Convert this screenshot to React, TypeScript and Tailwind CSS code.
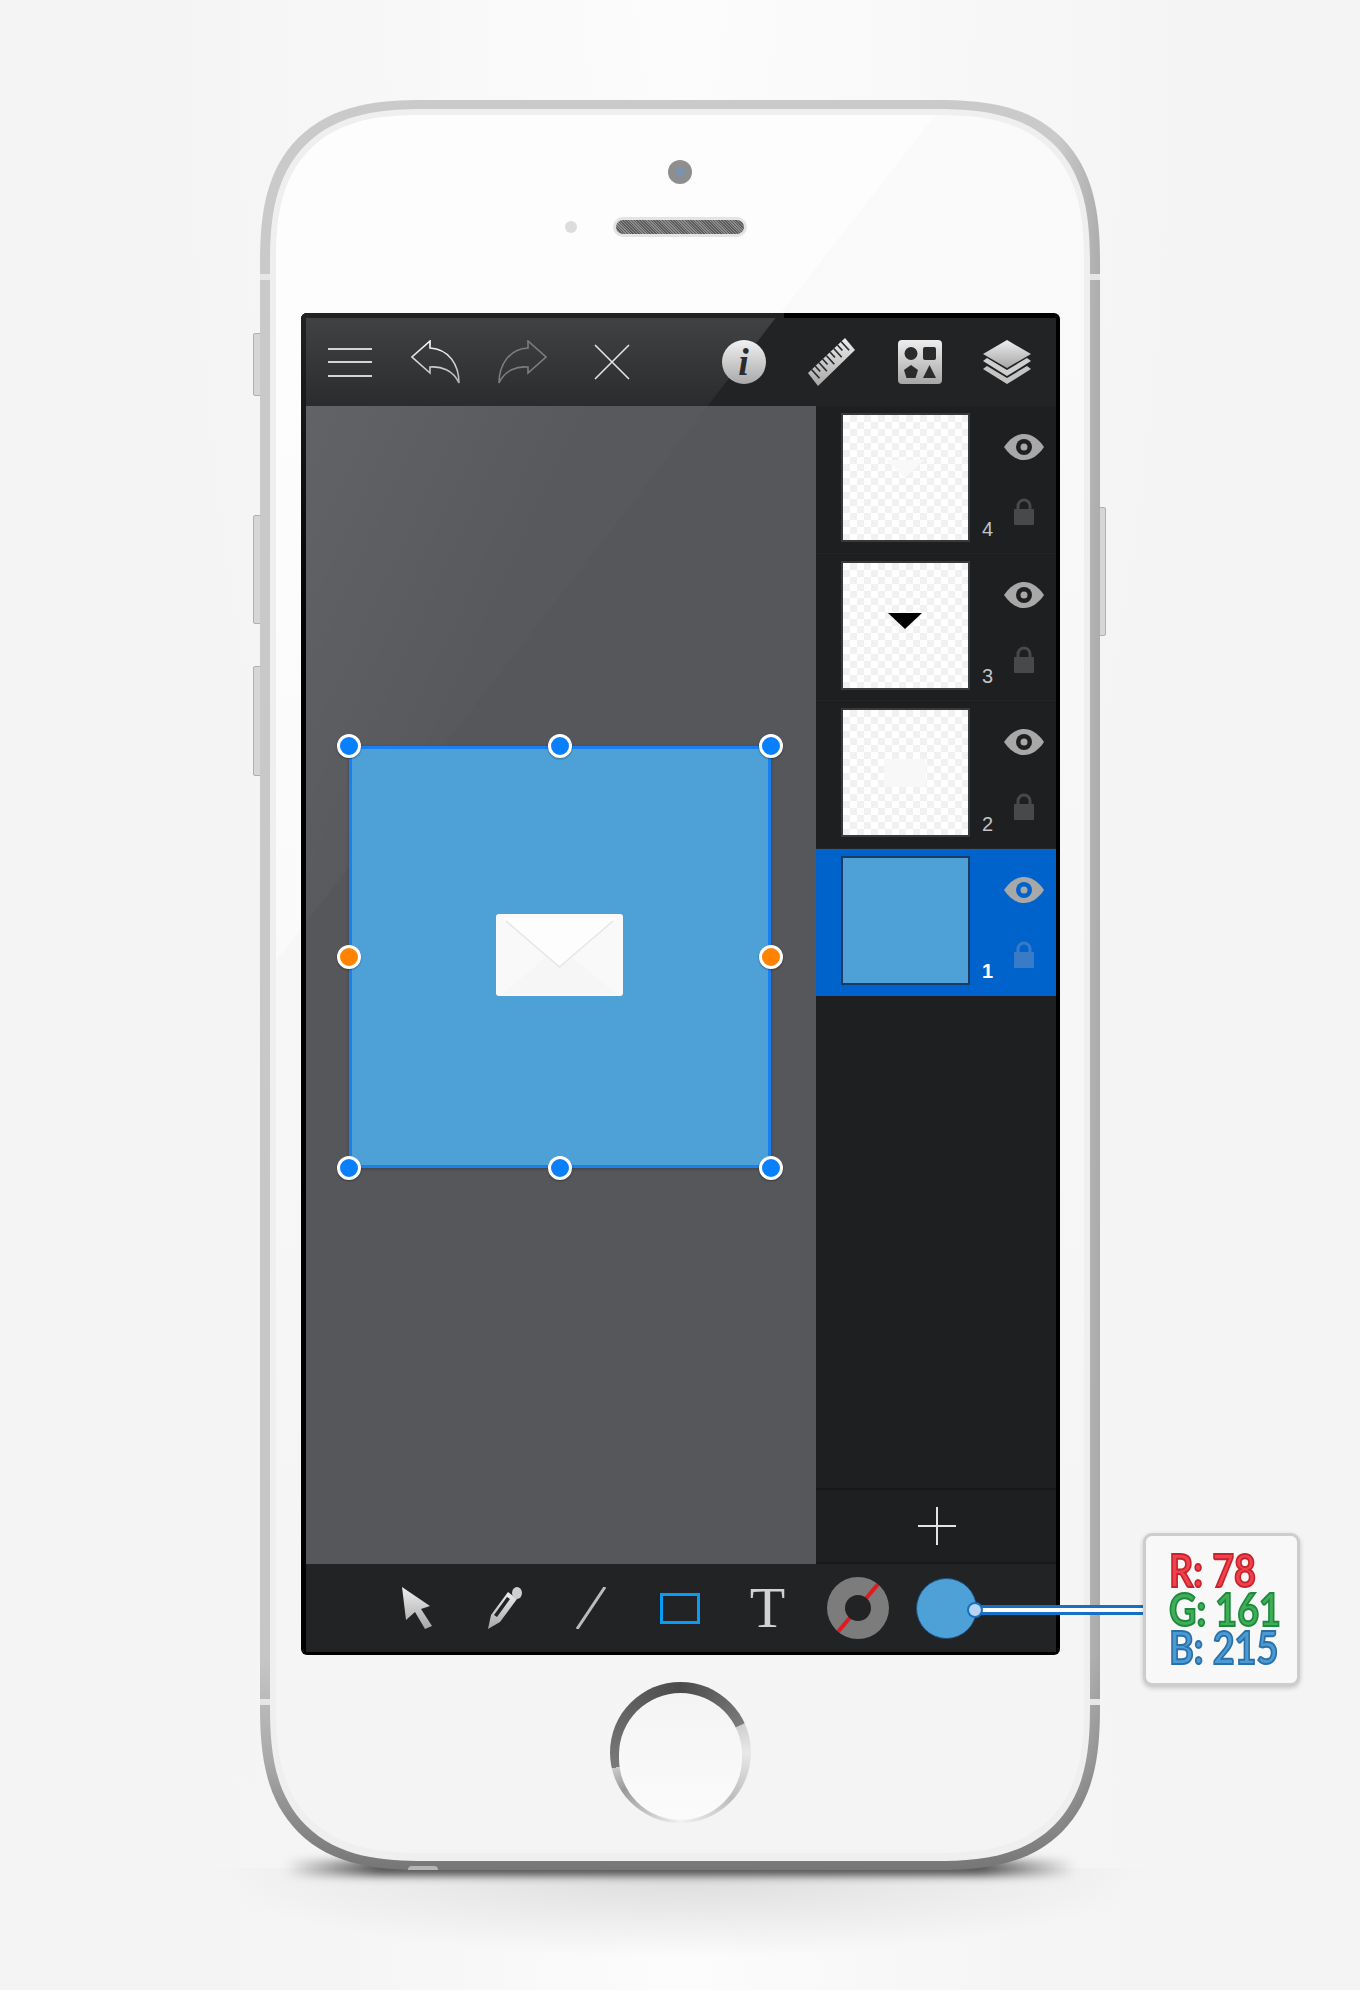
import type { ReactNode } from 'react'

const layers = [
  { num: 4, art: <div className="w-[40px] h-[18px] bg-[#f9f9f9] [clip-path:polygon(0_0,100%_0,50%_100%)] -mt-[18px]" /> },
  { num: 3, art: <div className="w-[34px] h-[16px] bg-black [clip-path:polygon(0_0,100%_0,50%_100%)] -mt-[8px]" /> },
  { num: 2, art: <div className="w-[42px] h-[28px] bg-[#f8f8f8] rounded-[2px]" /> },
  { num: 1, art: null, active: true },
]

const rulerTicks = [0, 1, 2, 3, 4, 5, 6, 7, 8]

function Eye() {
  return (
    <svg width="40" height="26" viewBox="0 0 40 26">
      <path d="M0 13C6 4 13 0 20 0s14 4 20 13c-6 9-13 13-20 13S6 22 0 13Z" fill="#a8a8a8" />
      <circle cx="20" cy="13" r="8" fill="currentColor" />
      <circle cx="20" cy="13" r="3.5" fill="#a8a8a8" />
    </svg>
  )
}

function Lock({ color }: { color: string }) {
  return (
    <svg width="20" height="28" viewBox="0 0 20 28">
      <path d="M4 14V9a6 6 0 0 1 12 0v5" fill="none" stroke={color} strokeWidth="3" />
      <rect x="0" y="12" width="20" height="16" rx="1" fill={color} />
    </svg>
  )
}

function LayerRow({ num, art, active }: { num: number; art: ReactNode; active?: boolean }) {
  return (
    <div className={`h-[147.5px] flex pl-[25px] pt-[7px] border-b ${active ? 'bg-[#0063cc] border-[#0063cc] text-[#0063cc]' : 'bg-[#1e1f21] border-[#232426] text-[#1e1f21]'}`}>
      <div
        className={`w-[129px] h-[129px] border-2 flex items-center justify-center ${active ? 'border-[#1d3a63] bg-[#4ea1d7]' : 'border-[#38393b] bg-white bg-[conic-gradient(#f1f1f1_25%,#ffffff_0_50%,#f1f1f1_0_75%,#ffffff_0)] bg-[length:14px_14px]'}`}
      >
        {art}
      </div>
      <div className={`w-[36px] self-end pb-[14px] text-center text-[20px] leading-[20px] font-['Liberation_Sans',sans-serif] ${active ? 'text-white font-bold' : 'text-[#c4c4c4]'}`}>
        {num}
      </div>
      <div className="flex flex-col items-center pt-[21px] gap-[37px] w-[40px] -ml-[2px]">
        <Eye />
        <Lock color={active ? '#3a7bc8' : '#48494b'} />
      </div>
    </div>
  )
}

function Handle({ pos, orange }: { pos: string; orange?: boolean }) {
  return (
    <div className={`absolute w-[24px] h-[24px] -translate-x-1/2 -translate-y-1/2 rounded-full border-[3px] border-white shadow-[0_1px_2px_rgba(0,0,0,0.35)] ${orange ? 'bg-[#ff8200]' : 'bg-[#0a7ffb]'} ${pos}`} />
  )
}

function TopBar() {
  return (
    <div className="relative h-[88px] flex items-center pl-[22px] bg-[#222325]">
      {/* glare on the bar */}
      <div className="absolute inset-0 bg-gradient-to-b from-white/[0.14] to-white/[0.04] [clip-path:polygon(0_0,470px_0,402px_100%,0_100%)]" />
      <div className="relative w-[44px] flex flex-col gap-[11.5px]">
        <div className="h-[2px] bg-[#d4d4d4]" />
        <div className="h-[2px] bg-[#d4d4d4]" />
        <div className="h-[2px] bg-[#d4d4d4]" />
      </div>
      <svg className="relative ml-[39px]" width="50" height="45" viewBox="0 0 50 45">
        <defs>
          <linearGradient id="undoG" x1="0" y1="0" x2="0" y2="1">
            <stop offset="0" stopColor="#ffffff" />
            <stop offset="1" stopColor="#b0b0b0" />
          </linearGradient>
        </defs>
        <path d="M19 1 1 17l18 16v-6c11-1 23 3 29 16 0-18-10-34-29-35Z" fill="none" stroke="url(#undoG)" strokeWidth="1.6" />
      </svg>
      <svg className="relative ml-[36px]" width="50" height="45" viewBox="0 0 50 45">
        <path d="M31 1l18 16-18 16v-6C20 26 8 30 2 43 2 25 12 9 31 8Z" fill="none" stroke="#7c7d7f" strokeWidth="1.6" />
      </svg>
      <svg className="relative ml-[47px]" width="36" height="36" viewBox="0 0 36 36">
        <path d="M1 1 35 35M35 1 1 35" stroke="#e4e4e4" strokeWidth="1.6" />
      </svg>
      <div className="relative ml-[92px] w-[44px] h-[44px] rounded-full bg-gradient-to-b from-[#f2f2f2] to-[#a9a9a9] flex items-center justify-center text-[#2a2b2d] font-['Liberation_Serif',serif] italic font-bold text-[38px] leading-none">
        i
      </div>
      <svg className="relative ml-[42px]" width="48" height="48" viewBox="0 0 48 48">
        <defs>
          <linearGradient id="iconG" x1="0" y1="0" x2="0" y2="1">
            <stop offset="0" stopColor="#eeeeee" />
            <stop offset="1" stopColor="#a6a6a6" />
          </linearGradient>
        </defs>
        <path d="M37 0 47 12 10 48 0 35Z" fill="url(#iconG)" />
        {rulerTicks.map((i) => {
          const x = 3.5 + i * 3.7
          const y = 31.5 - i * 3.5
          const len = i % 2 === 0 ? 8 : 5
          return <path key={i} d={`M${x} ${y}l${len} ${len * 1.1}`} stroke="#2a2b2d" strokeWidth="1.7" />
        })}
      </svg>
      <svg className="relative ml-[42px]" width="44" height="44" viewBox="0 0 44 44">
        <rect width="44" height="44" rx="4" fill="url(#iconG)" />
        <circle cx="13" cy="13.500" r="6.500" fill="#2a2b2d" />
        <rect x="25" y="7" width="13" height="13" rx="2" fill="#2a2b2d" />
        <path d="M13 25l7 5-2.500 8h-9L6 30Z" fill="#2a2b2d" />
        <path d="M31.500 25 38 38H25Z" fill="#2a2b2d" />
      </svg>
      <svg className="relative ml-[41px]" width="48" height="44" viewBox="0 0 48 44">
        <path d="M24 0 48 14 24 28 0 14Z" fill="url(#iconG)" />
        <path d="M4 18 24 30 44 18l4 3L24 36 0 21Z" fill="#cfcfcf" />
        <path d="M4 26 24 38 44 26l4 3L24 44 0 29Z" fill="#c4c4c4" />
      </svg>
    </div>
  )
}

function ToolBar() {
  return (
    <div className="h-[88px] flex items-center pl-[96px] bg-[#222325]">
      <svg width="30" height="42" viewBox="0 0 30 42">
        <path d="M0 0 28 19 19 22 30 39 23 42 13 25 4 33Z" fill="url(#iconG)" />
      </svg>
      <svg className="ml-[56px]" width="34" height="42" viewBox="0 0 34 42">
        <path d="M0 42 3 28 20 5 29 12 12 35Z" fill="url(#iconG)" />
        <path d="M6 28 19 10 22 12 9 30Z" fill="#222325" />
        <ellipse cx="29" cy="6" rx="5" ry="6" fill="#cfcfcf" />
      </svg>
      <svg className="ml-[53px]" width="32" height="42" viewBox="0 0 32 42">
        <path d="M30 0 2 42" stroke="#bcbcbc" strokeWidth="3" />
      </svg>
      <div className="ml-[53px] w-[40px] h-[31px] border-[3px] border-[#0a9cf5]" />
      <div className="ml-[49px] w-[38px] text-center font-['Liberation_Serif',serif] text-[58px] leading-[58px] text-[#d2d2d2]">T</div>
      <div className="ml-[40px] relative w-[62px] h-[62px] rounded-full bg-[#7c7c7c] flex items-center justify-center overflow-hidden">
        <div className="absolute w-[4px] h-[62px] bg-[#e01a1f] rotate-[40deg]" />
        <div className="relative w-[26px] h-[26px] rounded-full bg-[#222325]" />
      </div>
      <div className="ml-[27px] w-[61px] h-[61px] rounded-full bg-[#4ea1d7] border border-[#1d4f80]" />
    </div>
  )
}

export default function App() {
  return (
    <div className="w-full h-[1990px] pt-[100px] overflow-hidden bg-[radial-gradient(ellipse_at_50%_100%,#fcfcfc_0%,#f5f5f5_35%,transparent_60%),radial-gradient(ellipse_at_50%_0%,#fcfcfc_0%,#f4f4f4_55%)] font-['Liberation_Sans',sans-serif]">
      <div className="relative w-[840px] h-[1770px] mx-auto">
        {/* shadow + reflection */}
        <div className="absolute -left-[60px] -right-[60px] top-[1768px] h-[90px] bg-[radial-gradient(ellipse_at_50%_0%,#d9d9d9_0%,transparent_70%)]" />
        <div className="absolute left-[25px] right-[25px] top-[1760px] h-[16px] bg-[linear-gradient(to_right,transparent,#555555_12%,#555555_88%,transparent)] blur-[4px]" />

        {/* side buttons */}
        <div className="absolute -left-[7px] top-[233px] w-[8px] h-[63px] rounded-l-[2px] bg-[#d6d6d6] border border-[#b0b0b0]" />
        <div className="absolute -left-[7px] top-[415px] w-[8px] h-[109px] rounded-l-[2px] bg-[#d6d6d6] border border-[#b0b0b0]" />
        <div className="absolute -left-[7px] top-[566px] w-[8px] h-[110px] rounded-l-[2px] bg-[#d6d6d6] border border-[#b0b0b0]" />
        <div className="absolute -right-[6px] top-[407px] w-[7px] h-[129px] rounded-r-[2px] bg-[#d6d6d6] border border-[#b0b0b0]" />

        {/* body */}
        <div className="relative h-full rounded-[165px] [corner-shape:superellipse(1.4)] bg-[linear-gradient(to_right,transparent_95%,rgba(0,0,0,0.14)),linear-gradient(to_bottom,#cacaca_0%,#c6c6c6_88%,#a8a8a8_94%,#8c8c8c_97%,#767676_100%)] pt-[9px] px-[10px] pb-[9px]">
          <div className="absolute left-0 w-[10px] top-[174px] h-[6px] bg-[#e6e6e6]" />
          <div className="absolute right-0 w-[10px] top-[174px] h-[6px] bg-[#e6e6e6]" />
          <div className="absolute left-0 w-[10px] top-[1599px] h-[6px] bg-[#e6e6e6]" />
          <div className="absolute right-0 w-[10px] top-[1599px] h-[6px] bg-[#e6e6e6]" />
          <div className="absolute left-[148px] bottom-0 w-[30px] h-[4px] rounded-t-full bg-[#b5b5b5]" />

          <div className="h-full rounded-[155px] [corner-shape:superellipse(1.4)] bg-[#efefef] pt-[6px] px-[6px] pb-[8px]">
            <div className="relative h-full rounded-[148px] [corner-shape:superellipse(1.4)] overflow-hidden bg-gradient-to-b from-[#fafafa] to-[#f4f4f4] flex flex-col items-center">
              {/* glare on the glass */}
              <div className="absolute inset-0 bg-gradient-to-b from-white/70 to-white/10 [clip-path:polygon(0_0,659px_0,0_846px)]" />

              <div className="relative h-[198px] w-full flex flex-col items-center pt-[45px]">
                <div className="w-[24px] h-[24px] rounded-full bg-[#8e8e8e] flex items-center justify-center">
                  <div className="w-[10px] h-[10px] rounded-full bg-[#7d93ad]" />
                </div>
                <div className="mt-[33px] w-full grid grid-cols-[1fr_134px_1fr] items-center">
                  <div className="justify-self-end mr-[36px] w-[12px] h-[12px] rounded-full bg-[#dcdcdc]" />
                  <div className="h-[20px] rounded-full bg-[#e4e4e4] p-[3px]">
                    <div className="h-full rounded-full bg-[repeating-linear-gradient(45deg,#5c5c5c_0_1px,#8c8c8c_1px_2px)]" />
                  </div>
                </div>
              </div>

              {/* screen */}
              <div className="relative w-[759px] h-[1342px] shrink-0 rounded-[6px] bg-black pt-[5px] pl-[5px] pr-[4px] pb-[3px] flex flex-col overflow-hidden">
                <div className="absolute left-0 top-0 w-[483px] h-[5px] bg-[#222]" />
                <div className="absolute left-0 top-0 w-[5px] h-[560px] bg-gradient-to-b from-[#222] to-black" />
                <TopBar />
                <div className="relative flex h-[1158px]">
                  <div className="relative flex-1 bg-[#56575b] pl-[43px] pt-[340px]">
                    <div className="absolute inset-0 bg-[linear-gradient(115deg,rgba(255,255,255,0.07),rgba(255,255,255,0.012)_28%,rgba(255,255,255,0.006))] [clip-path:polygon(0_0,402px_0,0_517px)]" />
                    <div className="relative w-[422px] h-[422px] shadow-[inset_0_0_0_3px_#1a80f0,0_1px_3px_rgba(0,0,0,0.25)] bg-[#4ea1d7] flex items-center justify-center">
                      <svg className="-mt-[4px]" width="127" height="82" viewBox="0 0 127 82">
                        <rect width="127" height="82" rx="3" fill="#f9f9f9" />
                        <path d="M6 80 50 43l13 10 13-10 45 37Z" fill="#f6f6f6" />
                        <path d="M6 4h115L63.500 53Z" fill="#fdfdfd" />
                        <path d="M10 7 63.500 53 117 7" fill="none" stroke="#e6e6e6" strokeWidth="1.500" />
                      </svg>
                      <Handle pos="left-0 top-0" />
                      <Handle pos="left-1/2 top-0" />
                      <Handle pos="left-full top-0" />
                      <Handle pos="left-0 top-1/2" orange />
                      <Handle pos="left-full top-1/2" orange />
                      <Handle pos="left-0 top-full" />
                      <Handle pos="left-1/2 top-full" />
                      <Handle pos="left-full top-full" />
                    </div>
                  </div>
                  <div className="w-[240px] bg-[#1e1f21] flex flex-col">
                    {layers.map((l) => (
                      <LayerRow key={l.num} num={l.num} art={l.art} active={l.active} />
                    ))}
                    <div className="flex-1" />
                    <div className="h-[76px] pl-[2px] border-t-2 border-b-2 border-[#17181a] flex items-center justify-center">
                      <div className="relative w-[38px] h-[38px] flex items-center justify-center">
                        <div className="w-[38px] h-[2px] bg-[#e4e4e4]" />
                        <div className="absolute w-[2px] h-[38px] bg-[#e4e4e4]" />
                      </div>
                    </div>
                  </div>
                </div>
                <ToolBar />
              </div>

              {/* home button */}
              <div className="relative mt-[27px] w-[141px] h-[141px] rounded-full pt-[11px] px-[9px] pb-[3px] bg-[conic-gradient(from_-103deg,#7a7a7a_0deg,#4a4a4a_103deg,#7a7a7a_168deg,#d0d0d0_169deg,#e8e8e8_193deg,#bdbdbd_235deg,#f2f2f2_283deg,#c8c8c8_310deg,#999999_340deg,#c8c8c8_359deg)]">
                <div className="w-full h-full rounded-full bg-gradient-to-b from-[#f4f4f4] to-[#fbfbfb]" />
              </div>
            </div>
          </div>
        </div>

        {/* connector and RGB callout */}
        <div className="absolute left-[715px] top-[1505px] w-[168px] h-[10px] bg-[#1670c4] flex items-center">
          <div className="w-full h-[4px] bg-white" />
        </div>
        <div className="absolute left-[707px] top-[1502px] w-[16px] h-[16px] rounded-full bg-[#b8d4f5] border-2 border-[#1670c4]" />
        <div className="absolute left-[883px] top-[1433px] w-[157px] h-[153px] rounded-[9px] border-[3px] border-[#cdcdcd] bg-[#f8f8f8] shadow-[0_2px_5px_rgba(0,0,0,0.2)] pt-[15px] pl-[23px] font-['Lato',sans-serif] font-bold text-[46px] leading-[38.500px]">
          <div className="origin-left scale-x-[0.82] text-[#f0424c] [-webkit-text-stroke:2px_#c9222c] whitespace-pre">R: 78</div>
          <div className="origin-left scale-x-[0.82] text-[#3fae58] [-webkit-text-stroke:2px_#1f8a3e] whitespace-pre">G: 161</div>
          <div className="origin-left scale-x-[0.82] text-[#4a9ad4] [-webkit-text-stroke:2px_#2c70a8] whitespace-pre">B: 215</div>
        </div>
      </div>
    </div>
  )
}
